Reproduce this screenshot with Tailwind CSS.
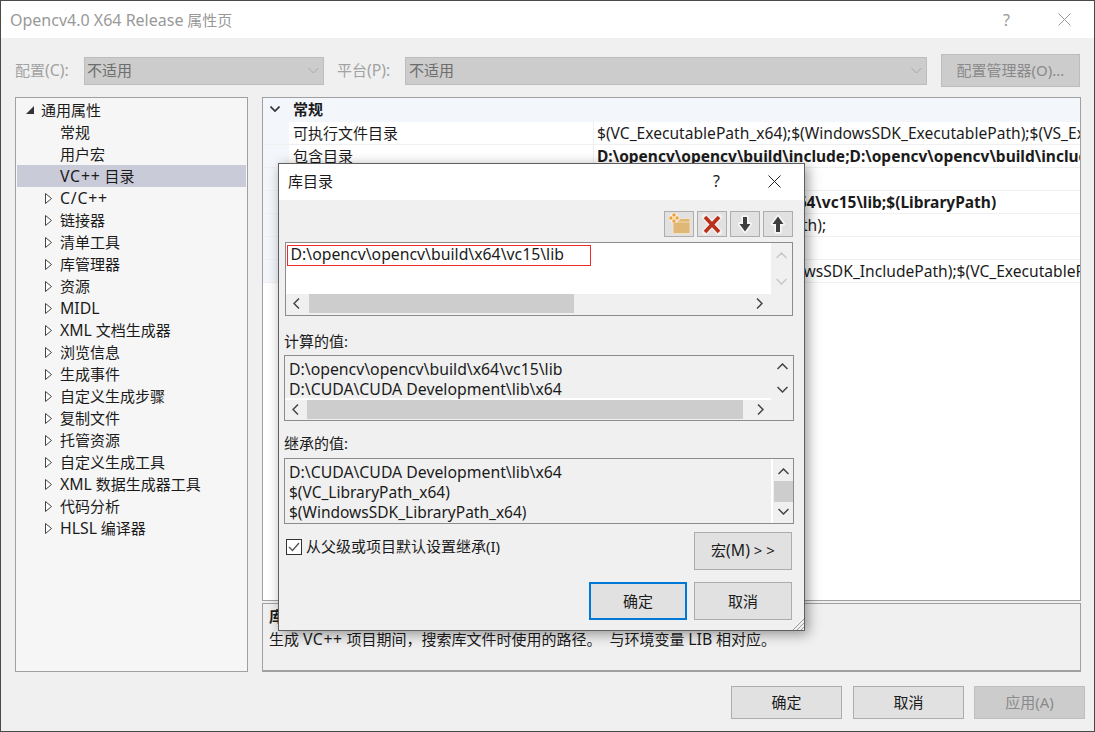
<!DOCTYPE html>
<html lang="zh-CN">
<head>
  <meta charset="UTF-8">
  <title>Opencv4.0 X64 Release 属性页</title>
  <script src="https://cdn.jsdelivr.net/npm/@tailwindcss/browser@4"></script>
</head>
<body class="bg-[#f0f0f0] font-['Noto_Sans','Noto_Sans_CJK_SC',sans-serif] text-[15px] text-[#1b1b1b]">
  <div class="relative w-[1095px] h-[732px] overflow-hidden border-t border-l border-r border-b border-[#4a4a4a] bg-[#f0f0f0] flex flex-col">
    <!-- Title bar -->
    <header class="h-[37px] shrink-0 bg-white flex items-center pl-[9px] text-[#999999]">
      <span><span class="text-[16px]">Opencv4.0 X64 Release</span> 属性页</span>
      <span class="ml-auto mr-[48px] text-[#9a9a9a] text-[16px]">?</span>
      <svg class="mr-[23px]" width="13" height="13" viewBox="0 0 13 13"><path d="M0.5 0.5L12.5 12.5M12.5 0.5L0.5 12.5" stroke="#999" fill="none"/></svg>
    </header>

    <!-- Config row -->
    <div class="h-[33px] mt-[16px] shrink-0 flex items-center pl-[14px] text-[#a2a2a2]">
      <span class="w-[69px]">配置<span class="text-[15.8px]">(C):</span></span>
      <div class="w-[240px] h-[28px] bg-[#cccccc] border border-[#bdbdbd] flex items-center pl-[2px] text-[#6d6d6d]">
        <span>不适用</span>
        <svg class="ml-auto mr-[4px]" width="11" height="7" viewBox="0 0 11 7"><path d="M0.5 1L5.5 6L10.5 1" stroke="#a8a8a8" fill="none"/></svg>
      </div>
      <span class="ml-[13px] w-[68px]">平台<span class="text-[15.8px]">(P):</span></span>
      <div class="w-[522px] h-[28px] bg-[#cccccc] border border-[#bdbdbd] flex items-center pl-[3px] text-[#6d6d6d]">
        <span>不适用</span>
        <svg class="ml-auto mr-[4px]" width="11" height="7" viewBox="0 0 11 7"><path d="M0.5 1L5.5 6L10.5 1" stroke="#a8a8a8" fill="none"/></svg>
      </div>
      <div class="ml-[14px] w-[139px] h-[33px] bg-[#cccccc] border border-[#bdbdbd] flex items-center justify-center text-[#8a8a8a]">配置管理器(O)...</div>
    </div>

    <div class="flex mt-[10px] pl-[14px]">
      <!-- Tree -->
      <nav class="w-[233px] h-[575px] shrink-0 bg-[#f6f6f6] border border-[#a0a0a0] pt-[1px] px-[1px]">
        <div class="h-[22px] flex items-center">
          <svg class="ml-[8px] mr-[6px]" width="10" height="10" viewBox="0 0 10 10"><path d="M9 1V9H1Z" fill="#333"/></svg>
          <span>通用属性</span>
        </div>
        <div class="h-[22px] flex items-center pl-[43px]">常规</div>
        <div class="h-[22px] flex items-center pl-[43px]">用户宏</div>
        <div class="h-[22px] flex items-center pl-[43px] pt-[2px] bg-[#cacbd8]"><span><span class="text-[15.8px] tracking-[0.8px]">VC++</span> 目录</span></div>
        <div class="h-[22px] flex items-center"><svg class="ml-[28px] mr-[8px]" width="7" height="11" viewBox="0 0 7 11"><path d="M0.5 0.5L6.5 5.5L0.5 10.5Z" fill="#fff" stroke="#444"/></svg><span class="text-[15.8px] tracking-[0.8px] pt-[2px]">C/C++</span></div>
        <div class="h-[22px] flex items-center"><svg class="ml-[28px] mr-[8px]" width="7" height="11" viewBox="0 0 7 11"><path d="M0.5 0.5L6.5 5.5L0.5 10.5Z" fill="#fff" stroke="#444"/></svg>链接器</div>
        <div class="h-[22px] flex items-center"><svg class="ml-[28px] mr-[8px]" width="7" height="11" viewBox="0 0 7 11"><path d="M0.5 0.5L6.5 5.5L0.5 10.5Z" fill="#fff" stroke="#444"/></svg>清单工具</div>
        <div class="h-[22px] flex items-center"><svg class="ml-[28px] mr-[8px]" width="7" height="11" viewBox="0 0 7 11"><path d="M0.5 0.5L6.5 5.5L0.5 10.5Z" fill="#fff" stroke="#444"/></svg>库管理器</div>
        <div class="h-[22px] flex items-center"><svg class="ml-[28px] mr-[8px]" width="7" height="11" viewBox="0 0 7 11"><path d="M0.5 0.5L6.5 5.5L0.5 10.5Z" fill="#fff" stroke="#444"/></svg>资源</div>
        <div class="h-[22px] flex items-center"><svg class="ml-[28px] mr-[8px]" width="7" height="11" viewBox="0 0 7 11"><path d="M0.5 0.5L6.5 5.5L0.5 10.5Z" fill="#fff" stroke="#444"/></svg><span class="text-[15.8px] pt-[2px]">MIDL</span></div>
        <div class="h-[22px] flex items-center"><svg class="ml-[28px] mr-[8px]" width="7" height="11" viewBox="0 0 7 11"><path d="M0.5 0.5L6.5 5.5L0.5 10.5Z" fill="#fff" stroke="#444"/></svg><span class="pt-[2px]"><span class="text-[15.8px]">XML</span> 文档生成器</span></div>
        <div class="h-[22px] flex items-center"><svg class="ml-[28px] mr-[8px]" width="7" height="11" viewBox="0 0 7 11"><path d="M0.5 0.5L6.5 5.5L0.5 10.5Z" fill="#fff" stroke="#444"/></svg>浏览信息</div>
        <div class="h-[22px] flex items-center"><svg class="ml-[28px] mr-[8px]" width="7" height="11" viewBox="0 0 7 11"><path d="M0.5 0.5L6.5 5.5L0.5 10.5Z" fill="#fff" stroke="#444"/></svg>生成事件</div>
        <div class="h-[22px] flex items-center"><svg class="ml-[28px] mr-[8px]" width="7" height="11" viewBox="0 0 7 11"><path d="M0.5 0.5L6.5 5.5L0.5 10.5Z" fill="#fff" stroke="#444"/></svg>自定义生成步骤</div>
        <div class="h-[22px] flex items-center"><svg class="ml-[28px] mr-[8px]" width="7" height="11" viewBox="0 0 7 11"><path d="M0.5 0.5L6.5 5.5L0.5 10.5Z" fill="#fff" stroke="#444"/></svg>复制文件</div>
        <div class="h-[22px] flex items-center"><svg class="ml-[28px] mr-[8px]" width="7" height="11" viewBox="0 0 7 11"><path d="M0.5 0.5L6.5 5.5L0.5 10.5Z" fill="#fff" stroke="#444"/></svg>托管资源</div>
        <div class="h-[22px] flex items-center"><svg class="ml-[28px] mr-[8px]" width="7" height="11" viewBox="0 0 7 11"><path d="M0.5 0.5L6.5 5.5L0.5 10.5Z" fill="#fff" stroke="#444"/></svg>自定义生成工具</div>
        <div class="h-[22px] flex items-center"><svg class="ml-[28px] mr-[8px]" width="7" height="11" viewBox="0 0 7 11"><path d="M0.5 0.5L6.5 5.5L0.5 10.5Z" fill="#fff" stroke="#444"/></svg><span class="pt-[2px]"><span class="text-[15.8px]">XML</span> 数据生成器工具</span></div>
        <div class="h-[22px] flex items-center"><svg class="ml-[28px] mr-[8px]" width="7" height="11" viewBox="0 0 7 11"><path d="M0.5 0.5L6.5 5.5L0.5 10.5Z" fill="#fff" stroke="#444"/></svg>代码分析</div>
        <div class="h-[22px] flex items-center"><svg class="ml-[28px] mr-[8px]" width="7" height="11" viewBox="0 0 7 11"><path d="M0.5 0.5L6.5 5.5L0.5 10.5Z" fill="#fff" stroke="#444"/></svg><span class="pt-[2px]"><span class="text-[15.8px]">HLSL</span> 编译器</span></div>
      </nav>

      <!-- Property grid + description -->
      <div class="ml-[14px] w-[819px] shrink-0 flex flex-col">
        <section class="h-[504px] bg-white border border-[#a0a0a0] overflow-hidden">
          <div class="h-[24px] bg-[#f3f6fb] flex items-center pb-[2px]">
            <svg class="ml-[7px] mr-[13px]" width="10" height="7" viewBox="0 0 10 7"><path d="M0.5 0.5L5 5L9.5 0.5" stroke="#333" stroke-width="1.6" fill="none"/></svg>
            <b class="font-bold">常规</b>
          </div>
          <div class="flex h-[23px] border-b border-[#f0f0f0]">
            <div class="w-[26px] shrink-0 bg-[#f3f6fb]"></div>
            <div class="w-[305px] shrink-0 pl-[4px] leading-[22px] border-r border-[#f0f0f0]">可执行文件目录</div>
            <div class="pl-[3px] leading-[22px] text-[15.6px] whitespace-nowrap overflow-hidden">$(VC_ExecutablePath_x64);$(WindowsSDK_ExecutablePath);$(VS_ExecutablePath);</div>
          </div>
          <div class="flex h-[23px] border-b border-[#f0f0f0]">
            <div class="w-[26px] shrink-0 bg-[#f3f6fb]"></div>
            <div class="w-[305px] shrink-0 pl-[4px] leading-[22px] border-r border-[#f0f0f0]">包含目录</div>
            <div class="pl-[3px] leading-[22px] text-[15.5px] font-bold whitespace-nowrap overflow-hidden">D:\opencv\opencv\build\include;D:\opencv\opencv\build\include\opencv2;</div>
          </div>
          <div class="flex h-[23px] border-b border-[#f0f0f0]">
            <div class="w-[26px] shrink-0 bg-[#f3f6fb]"></div>
            <div class="w-[305px] shrink-0 pl-[4px] leading-[22px] border-r border-[#f0f0f0]">引用目录</div>
            <div class="pl-[3px] leading-[22px] text-[15.6px] whitespace-nowrap overflow-hidden">$(VC_ReferencesPath_x64);</div>
          </div>
          <div class="flex h-[23px] border-b border-[#f0f0f0]">
            <div class="w-[26px] shrink-0 bg-[#f3f6fb]"></div>
            <div class="w-[305px] shrink-0 pl-[4px] leading-[22px] border-r border-[#f0f0f0]">库目录</div>
            <div class="pl-[3px] leading-[22px] text-[15.5px] font-bold whitespace-nowrap overflow-hidden">D:\opencv\opencv\build\x64\vc15\lib;$(LibraryPath)</div>
          </div>
          <div class="flex h-[23px] border-b border-[#f0f0f0]">
            <div class="w-[26px] shrink-0 bg-[#f3f6fb]"></div>
            <div class="w-[305px] shrink-0 pl-[4px] leading-[22px] border-r border-[#f0f0f0]">Windows 运行库目录</div>
            <div class="pl-[3px] leading-[22px] text-[15.6px] whitespace-nowrap overflow-hidden">$(WindowsSDK_MetadataPath);</div>
          </div>
          <div class="flex h-[23px] border-b border-[#f0f0f0]">
            <div class="w-[26px] shrink-0 bg-[#f3f6fb]"></div>
            <div class="w-[305px] shrink-0 pl-[4px] leading-[22px] border-r border-[#f0f0f0]">源目录</div>
            <div class="pl-[3px] leading-[22px] whitespace-nowrap overflow-hidden"></div>
          </div>
          <div class="flex h-[23px] border-b border-[#f0f0f0]">
            <div class="w-[26px] shrink-0 bg-[#f3f6fb]"></div>
            <div class="w-[305px] shrink-0 pl-[4px] leading-[22px] border-r border-[#f0f0f0]">排除目录</div>
            <div class="pl-[3px] leading-[22px] text-[15.6px] whitespace-nowrap overflow-hidden">$(CommonExclude);$(WindowsSDK_IncludePath);$(VC_ExecutablePath_x64);</div>
          </div>
        </section>
        <section class="mt-[2px] h-[69px] border border-b-2 border-[#a0a0a0] pl-[6px]">
          <div class="font-bold leading-[22px] mt-[1px]">库目录</div>
          <div class="leading-[22px] mt-[1px] whitespace-pre">生成 <span class="text-[15.8px] tracking-[0.6px]">VC++</span> 项目期间，搜索库文件时使用的路径。  与环境变量 <span class="text-[15.8px]">LIB</span> 相对应。</div>
        </section>
      </div>
    </div>

    <!-- Bottom buttons -->
    <div class="flex justify-end pr-[9px] mt-[14px]">
      <button class="w-[111px] h-[33px] bg-[#e1e1e1] border border-[#adadad]">确定</button>
      <button class="ml-[11px] w-[111px] h-[33px] bg-[#e1e1e1] border border-[#adadad]">取消</button>
      <button class="ml-[10px] w-[111px] h-[33px] bg-[#cccccc] border border-[#bfbfbf] text-[#8a8a8a]">应用(A)</button>
    </div>

    <!-- 库目录 dialog -->
    <div class="absolute left-[277px] top-[162px] w-[527px] h-[468px] bg-[#f0f0f0] border border-[#5f5f5f] shadow-[3px_3px_12px_rgba(0,0,0,0.4)] flex flex-col">
      <div class="h-[36px] shrink-0 bg-white flex items-center pl-[9px] pb-[2px]">
        <span>库目录</span>
        <span class="ml-auto mr-[48px] text-[16px]">?</span>
        <svg class="mr-[23px]" width="13" height="13" viewBox="0 0 13 13"><path d="M0.5 0.5L12.5 12.5M12.5 0.5L0.5 12.5" stroke="#222" fill="none"/></svg>
      </div>

      <!-- Toolbar -->
      <div class="flex justify-end gap-[3px] mt-[11px] pr-[11px]">
        <div class="w-[30px] h-[26px] bg-[#e1e1e1] border border-[#adadad]">
          <svg width="28" height="24" viewBox="0 0 28 24">
            <path d="M8 8H14L16 6.5H25V21.5H8Z" fill="#dfb877" stroke="#f2e3c6"/>
            <path d="M8 10H25" stroke="#efd9ae"/>
            <circle cx="9" cy="6" r="5" fill="#f7f0e2"/>
            <circle cx="9" cy="3" r="1.7" fill="#ee9f3c"/><circle cx="9" cy="9" r="1.7" fill="#ee9f3c"/>
            <circle cx="6" cy="6" r="1.7" fill="#ee9f3c"/><circle cx="12" cy="6" r="1.7" fill="#ee9f3c"/>
            <circle cx="9" cy="6" r="1.6" fill="#fbe3a8"/>
          </svg>
        </div>
        <div class="w-[30px] h-[26px] bg-[#e1e1e1] border border-[#adadad]">
          <svg width="28" height="24" viewBox="0 0 28 24">
            <path d="M7 5L21 20M21 5L7 20" stroke="#f5efec" stroke-width="6.6" stroke-linecap="round"/>
            <path d="M7 5L21 20M21 5L7 20" stroke="#b9301d" stroke-width="3.6"/>
          </svg>
        </div>
        <div class="w-[30px] h-[26px] bg-[#e1e1e1] border border-[#adadad]">
          <svg width="28" height="24" viewBox="0 0 28 24">
            <path d="M12 5H16V12H19.5L14 19.5L8.5 12H12Z" fill="#3e3e3e" stroke="#f7f7f7" stroke-width="3.4" stroke-linejoin="round" paint-order="stroke"/>
          </svg>
        </div>
        <div class="w-[30px] h-[26px] bg-[#e1e1e1] border border-[#adadad]">
          <svg width="28" height="24" viewBox="0 0 28 24">
            <path d="M12 20H16V12H19.5L14 4.5L8.5 12H12Z" fill="#3e3e3e" stroke="#f7f7f7" stroke-width="3.4" stroke-linejoin="round" paint-order="stroke"/>
          </svg>
        </div>
      </div>

      <!-- Editable list -->
      <div class="ml-[6px] mt-[5px] w-[508px] h-[74px] border border-[#8c8c8c] flex flex-col">
        <div class="flex h-[51px]">
          <div class="flex-1 bg-white relative pl-[4.5px] leading-[22px] text-[15.8px]">
            D:\opencv\opencv\build\x64\vc15\lib
            <div class="absolute left-[1px] top-[2px] w-[304px] h-[21px] border border-[#ee2b2b]"></div>
          </div>
          <div class="w-[21px] flex flex-col items-center justify-between py-[9px]">
            <svg width="11" height="7" viewBox="0 0 11 7"><path d="M0.5 6L5.5 1L10.5 6" stroke="#c8c8c8" stroke-width="1.5" fill="none"/></svg>
            <svg width="11" height="7" viewBox="0 0 11 7"><path d="M0.5 1L5.5 6L10.5 1" stroke="#c8c8c8" stroke-width="1.5" fill="none"/></svg>
          </div>
        </div>
        <div class="h-[19px] flex items-center">
          <svg class="ml-[7px] mr-[9px]" width="7" height="11" viewBox="0 0 7 11"><path d="M6 0.5L1 5.5L6 10.5" stroke="#444" stroke-width="1.5" fill="none"/></svg>
          <div class="w-[265px] h-[19px] bg-[#cdcdcd]"></div>
          <svg class="ml-auto mr-[29px]" width="7" height="11" viewBox="0 0 7 11"><path d="M1 0.5L6 5.5L1 10.5" stroke="#444" stroke-width="1.5" fill="none"/></svg>
        </div>
      </div>

      <!-- Computed values -->
      <div class="ml-[5px] mt-[15px] h-[20px] leading-[20px]">计算的值:</div>
      <div class="ml-[5px] mt-[4px] w-[510px] h-[66px] border border-[#8c8c8c] flex flex-col">
        <div class="flex h-[44px] items-stretch">
          <div class="flex-1 pl-[4px] pt-[3px] leading-[20px] text-[15.8px] border-b-2 border-white">
            <div>D:\opencv\opencv\build\x64\vc15\lib</div>
            <div>D:\CUDA\CUDA Development\lib\x64</div>
          </div>
          <div class="w-[22px] flex flex-col items-center justify-between py-[7px]">
            <svg width="11" height="7" viewBox="0 0 11 7"><path d="M0.5 6L5.5 1L10.5 6" stroke="#444" stroke-width="1.5" fill="none"/></svg>
            <svg width="11" height="7" viewBox="0 0 11 7"><path d="M0.5 1L5.5 6L10.5 1" stroke="#444" stroke-width="1.5" fill="none"/></svg>
          </div>
        </div>
        <div class="h-[19px] flex items-center">
          <svg class="ml-[7px] mr-[8px]" width="7" height="11" viewBox="0 0 7 11"><path d="M6 0.5L1 5.5L6 10.5" stroke="#444" stroke-width="1.5" fill="none"/></svg>
          <div class="w-[436px] h-[19px] bg-[#cdcdcd]"></div>
          <svg class="ml-[14px]" width="7" height="11" viewBox="0 0 7 11"><path d="M1 0.5L6 5.5L1 10.5" stroke="#444" stroke-width="1.5" fill="none"/></svg>
        </div>
      </div>

      <!-- Inherited values -->
      <div class="ml-[5px] mt-[12px] h-[20px] leading-[20px]">继承的值:</div>
      <div class="ml-[5px] mt-[5px] w-[510px] h-[66px] border border-[#8c8c8c] flex">
        <div class="flex-1 pl-[4px] pt-[3px] leading-[20px] text-[15.5px] border-r-2 border-white">
          <div class="text-[15.8px]">D:\CUDA\CUDA Development\lib\x64</div>
          <div>$(VC_LibraryPath_x64)</div>
          <div>$(WindowsSDK_LibraryPath_x64)</div>
        </div>
        <div class="w-[20px] flex flex-col items-center">
          <svg class="mt-[9px]" width="11" height="7" viewBox="0 0 11 7"><path d="M0.5 6L5.5 1L10.5 6" stroke="#444" stroke-width="1.5" fill="none"/></svg>
          <div class="mt-[6px] w-[19px] h-[21px] bg-[#cdcdcd]"></div>
          <svg class="mt-[6px]" width="11" height="7" viewBox="0 0 11 7"><path d="M0.5 1L5.5 6L10.5 1" stroke="#444" stroke-width="1.5" fill="none"/></svg>
        </div>
      </div>

      <!-- Inherit checkbox + macro button -->
      <div class="flex mt-[8px]">
        <div class="flex items-start ml-[7px]">
          <div class="mt-[7px] w-[16px] h-[16px] bg-white border border-[#333] flex items-center justify-center">
            <svg width="12" height="10" viewBox="0 0 12 10"><path d="M1 5L4.5 8.5L11 1" stroke="#555" stroke-width="1.4" fill="none"/></svg>
          </div>
          <span class="ml-[4px] mt-[4px] leading-[20px]">从父级或项目默认设置继承(I)</span>
        </div>
        <button class="ml-auto mr-[12px] w-[98px] h-[38px] bg-[#e1e1e1] border border-[#adadad]">宏<span class="text-[15.8px]">(M)</span>&nbsp;&gt;&nbsp;&gt;</button>
      </div>

      <!-- OK / Cancel -->
      <div class="flex justify-end gap-[7px] mt-[12px] pr-[12px]">
        <button class="w-[98px] h-[38px] bg-[#e1e1e1] border-2 border-[#0078d7]">确定</button>
        <button class="w-[98px] h-[38px] bg-[#e1e1e1] border border-[#adadad]">取消</button>
      </div>

      <!-- Resize grip -->
      <svg class="absolute right-0 bottom-0" width="12" height="12" viewBox="0 0 12 12"><path d="M12 1L1 12M12 5L5 12M12 9L9 12" stroke="#9a9a9a" fill="none"/></svg>
    </div>
  </div>
</body>
</html>
